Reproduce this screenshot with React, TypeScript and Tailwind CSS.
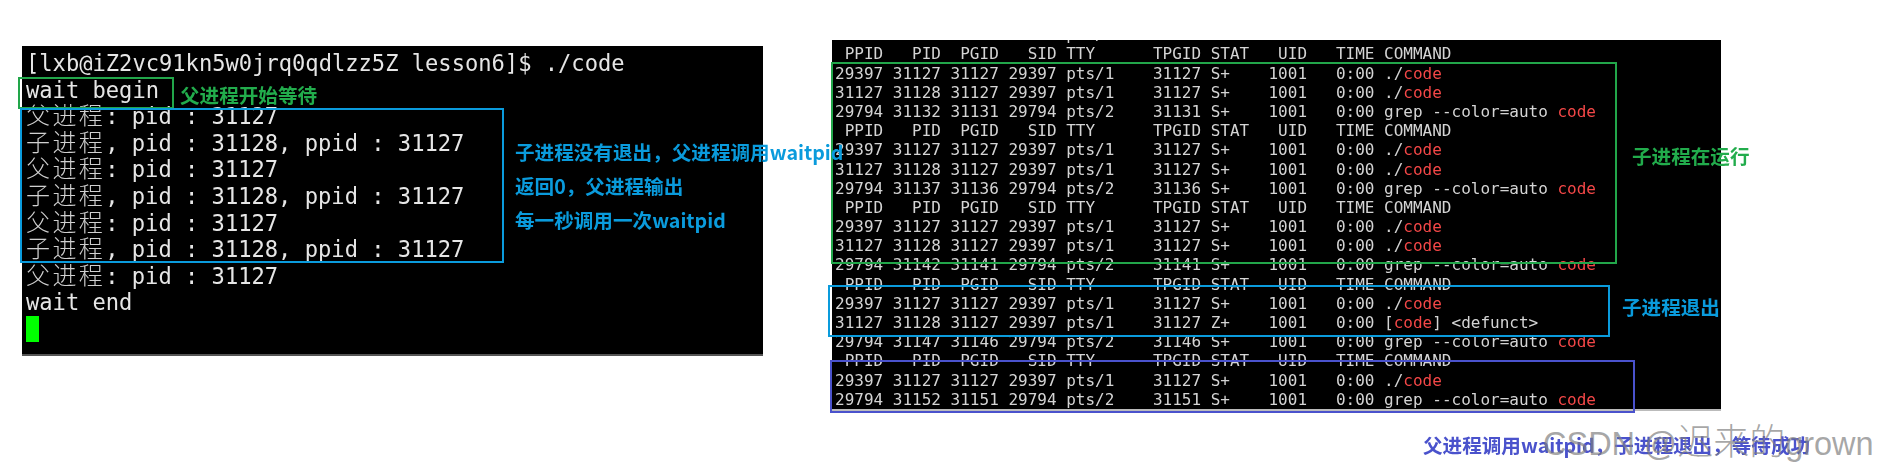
const mono = "font-['DejaVu_Sans_Mono','Noto_Sans_CJK_SC',monospace]";

function Cn({ children }: { children: string }) {
  return (
    <span className="font-['Noto_Sans_CJK_SC',sans-serif] font-light text-[24px] leading-[0px] tracking-[2.4px] text-[#d0d0d0]">
      {children}
    </span>
  );
}

const parent = (
  <>
    <Cn>父进程</Cn>: pid : 31127
  </>
);
const child = (
  <>
    <Cn>子进程</Cn>, pid : 31128, ppid : 31127
  </>
);

const leftLines = [
  "[lxb@iZ2vc91kn5w0jrq0qdlzz5Z lesson6]$ ./code",
  "wait begin",
  parent,
  child,
  parent,
  child,
  parent,
  child,
  parent,
  "wait end",
];

const H = " PPID   PID  PGID   SID TTY      TPGID STAT   UID   TIME COMMAND";

type Row = { t: string; c?: "run" | "grep" | "def" };
const rows: Row[] = [
  { t: "29794 31127 31127 29794 pts/2    31127 S+    1001   0:00 " },
  { t: H },
  { t: "29397 31127 31127 29397 pts/1    31127 S+    1001   0:00 ", c: "run" },
  { t: "31127 31128 31127 29397 pts/1    31127 S+    1001   0:00 ", c: "run" },
  { t: "29794 31132 31131 29794 pts/2    31131 S+    1001   0:00 ", c: "grep" },
  { t: H },
  { t: "29397 31127 31127 29397 pts/1    31127 S+    1001   0:00 ", c: "run" },
  { t: "31127 31128 31127 29397 pts/1    31127 S+    1001   0:00 ", c: "run" },
  { t: "29794 31137 31136 29794 pts/2    31136 S+    1001   0:00 ", c: "grep" },
  { t: H },
  { t: "29397 31127 31127 29397 pts/1    31127 S+    1001   0:00 ", c: "run" },
  { t: "31127 31128 31127 29397 pts/1    31127 S+    1001   0:00 ", c: "run" },
  { t: "29794 31142 31141 29794 pts/2    31141 S+    1001   0:00 ", c: "grep" },
  { t: H },
  { t: "29397 31127 31127 29397 pts/1    31127 S+    1001   0:00 ", c: "run" },
  { t: "31127 31128 31127 29397 pts/1    31127 Z+    1001   0:00 ", c: "def" },
  { t: "29794 31147 31146 29794 pts/2    31146 S+    1001   0:00 ", c: "grep" },
  { t: H },
  { t: "29397 31127 31127 29397 pts/1    31127 S+    1001   0:00 ", c: "run" },
  { t: "29794 31152 31151 29794 pts/2    31151 S+    1001   0:00 ", c: "grep" },
];

function Code() {
  return <span className="text-[#f44747]">code</span>;
}

const labelFont =
  "font-['Noto_Sans_CJK_SC','Noto_Sans',sans-serif] font-bold text-[19.6px] leading-[26px] whitespace-nowrap blur-[0.5px]";

export default function App() {
  return (
    <div className="relative w-[1882px] h-[474px] overflow-hidden bg-white flex items-start pl-[22px] pt-[46px]">
      <div className="relative z-10 w-[741px] h-[310px] shrink-0">
        <div className="w-full h-full bg-black border-b-2 border-[#555] pt-[4px] pl-[4px] blur-[0.5px]">
          <div className={`${mono} text-[22.1px] text-[#e6e6e6] whitespace-pre`}>
            {leftLines.map((l, i) => (
              <div key={i} className="h-[26.6px] leading-[26.6px]">
                {l}
              </div>
            ))}
            <div className="mt-[0.5px] w-[13px] h-[26px] bg-[#00ff00]" />
          </div>
        </div>

        <div className="absolute left-[-4px] top-[31px] w-[156px] h-[32px] border-2 border-[#22a64a]" />
        <div className="absolute left-[-2px] top-[62px] w-[484px] h-[155px] border-2 border-[#0a9bdc]" />

        <div className={`${labelFont} absolute left-[158px] top-[36px] text-[#22ac4c]`}>父进程开始等待</div>
        <div className={`${labelFont} absolute left-[493px] top-[93px] text-[#0a9bdc] flex flex-col gap-[8px]`}>
          <div>子进程没有退出，父进程调用waitpid</div>
          <div>返回0，父进程输出</div>
          <div>每一秒调用一次waitpid</div>
        </div>
      </div>

      <div className="relative w-[889px] h-[371px] shrink-0 ml-[69px] mt-[-6px]">
        <div className="w-full h-full bg-black border-b-2 border-[#bbb] overflow-hidden pl-[3px] blur-[0.4px]">
          <div className="mt-[-14.8px] font-['DejaVu_Sans_Mono',monospace] text-[16px] text-[#d4d4d4] whitespace-pre">
            {rows.map((r, i) => (
              <div key={i} className="h-[19.2px] leading-[19.2px]">
                {r.t}
                {r.c === "run" && (
                  <>
                    ./<Code />
                  </>
                )}
                {r.c === "grep" && (
                  <>
                    grep --color=auto <Code />
                  </>
                )}
                {r.c === "def" && (
                  <>
                    [<Code />] {"<defunct>"}
                  </>
                )}
              </div>
            ))}
          </div>
        </div>

        <div className="absolute left-[-1px] top-[22px] w-[786px] h-[202px] border-2 border-[#22a64a]" />
        <div className="absolute left-[-4px] top-[245px] w-[782px] h-[52px] border-2 border-[#0a9bdc]" />
        <div className="absolute left-[-2px] top-[320px] w-[805px] h-[53px] border-2 border-[#4a52cc]" />

        <div className={`${labelFont} absolute left-[800px] top-[103px] text-[#22ac4c]`}>子进程在运行</div>
        <div className={`${labelFont} absolute left-[790px] top-[254px] text-[#0a9bdc]`}>子进程退出</div>
        <div className={`${labelFont} absolute left-[591px] top-[392px] text-[#4a52cc]`}>父进程调用waitpid，子进程退出，等待成功</div>
      </div>

      <div className="absolute z-20 left-[1543px] top-[423px] font-['Liberation_Sans',sans-serif] text-[32.5px] leading-[42px] text-[#808080]/70 whitespace-nowrap">
        CSDN @<span className="font-['Noto_Sans_CJK_SC',sans-serif] font-light text-[36px] leading-[0px]">迟来的</span>grown
      </div>
    </div>
  );
}
